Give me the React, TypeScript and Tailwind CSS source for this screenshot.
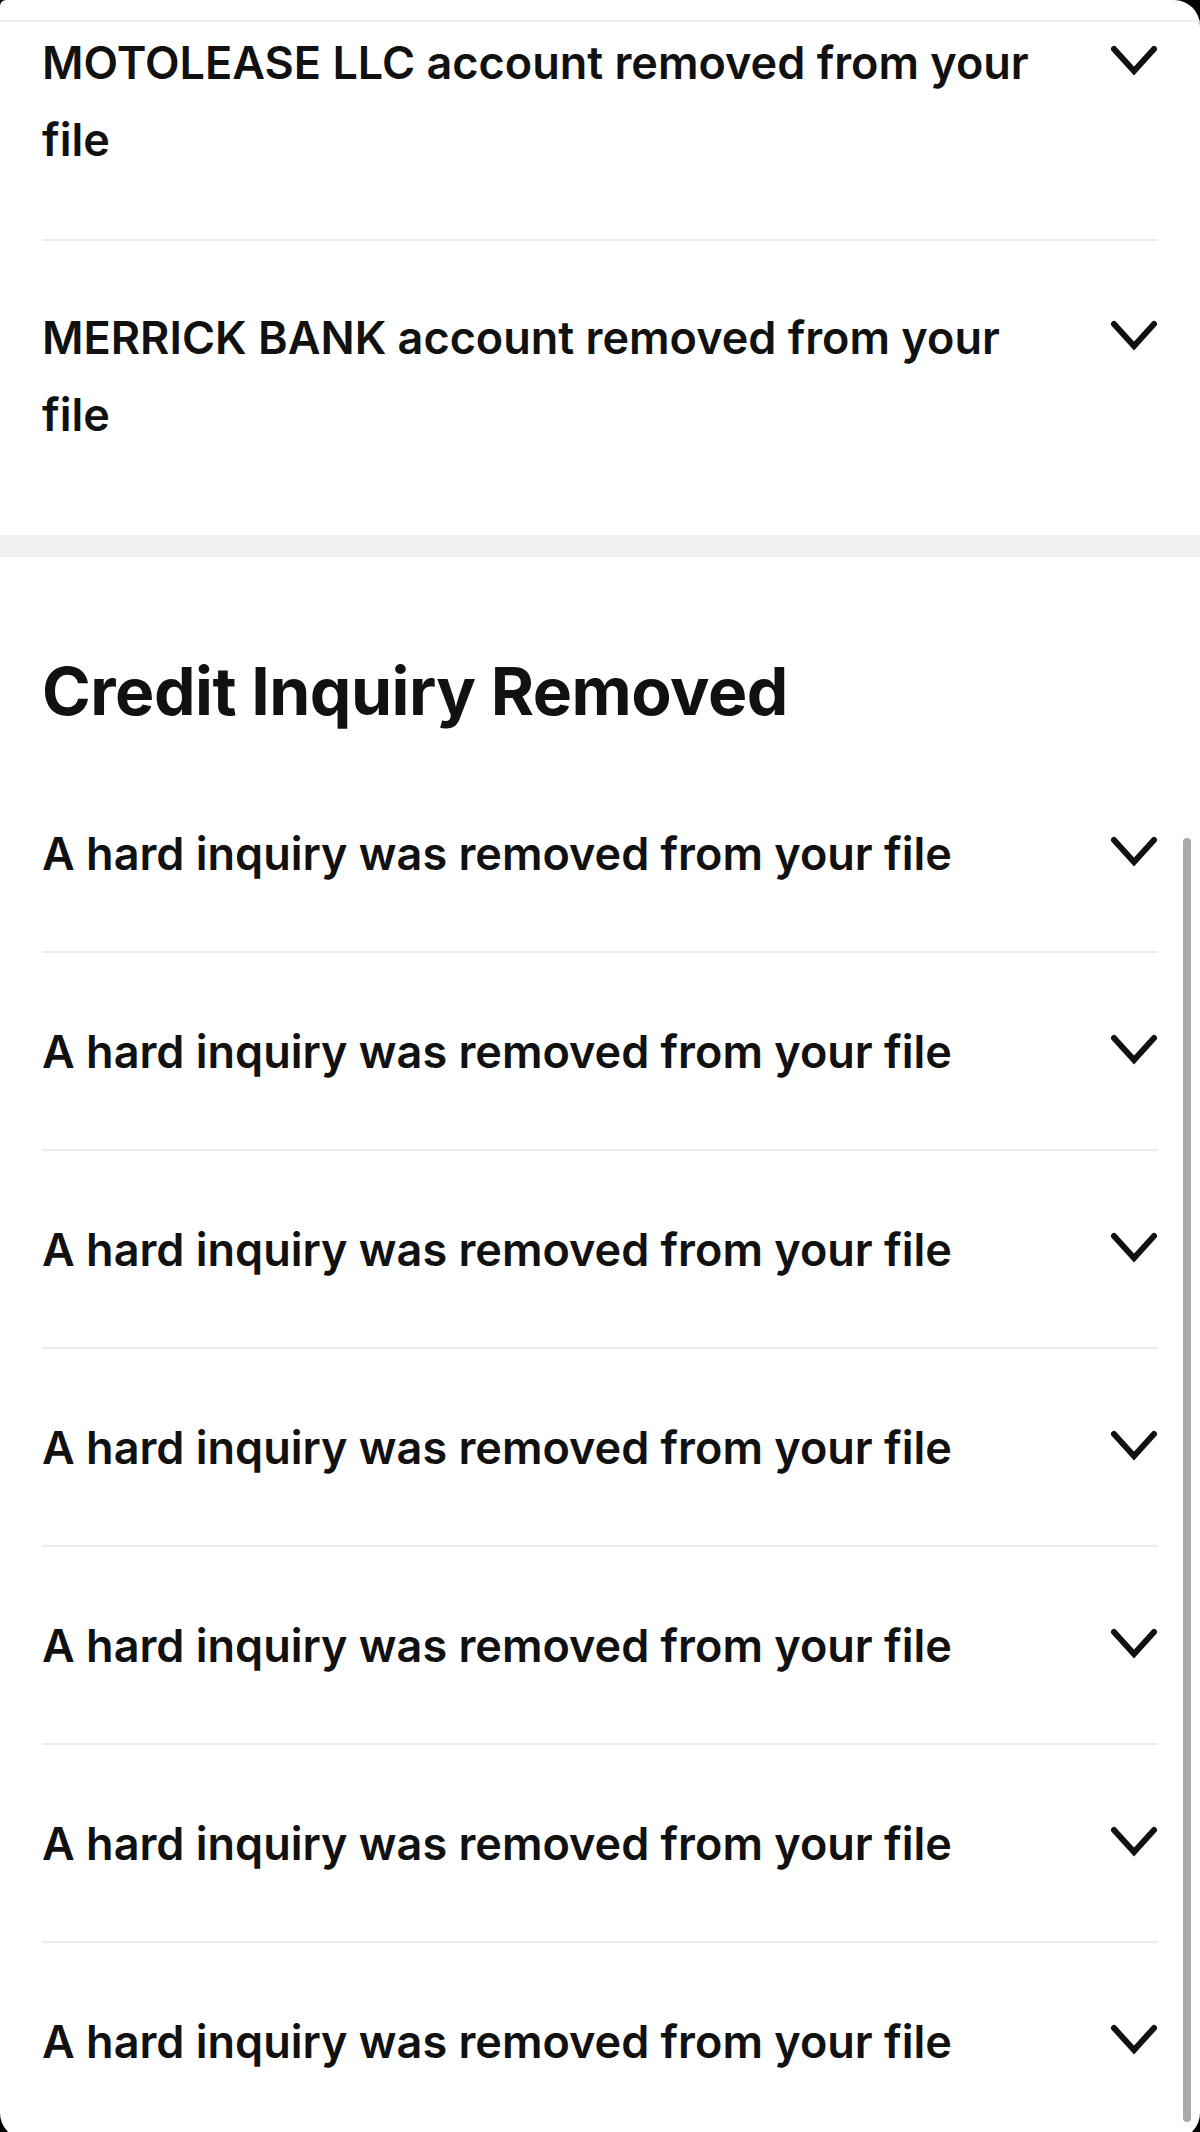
import React from 'react';

const Chevron: React.FC = () => (
  <svg width="48" height="32" viewBox="0 0 48 32" fill="none" className="shrink-0 mt-[21px]">
    <polyline points="4,4 24,26 44,4" stroke="#111111" strokeWidth="6" strokeLinecap="round" strokeLinejoin="miter" />
  </svg>
);

const Row: React.FC<{ text: string; last?: boolean; className?: string }> = ({ text, last, className }) => (
  <div className={`mx-[42px] flex items-start justify-between ${last ? '' : 'border-b-2 border-[#ececec]'} ${className ?? 'py-[59.5px]'}`}>
    <span className="max-w-[1010px] text-[45px] leading-[77px] font-semibold text-[#111111]">{text}</span>
    <Chevron />
  </div>
);

const App: React.FC = () => {
  const inquiries = Array.from({ length: 7 });

  return (
    <div className="bg-black min-h-[2132px] w-[1200px]" style={{ fontFamily: 'Inter, "Liberation Sans", sans-serif' }}>
      <div className="relative bg-white min-h-[2132px] rounded-tl-[6px] rounded-tr-[26px] rounded-b-[26px] overflow-hidden">
        {/* Accounts removed */}
        <div className="pt-[20px]">
          <div className="border-t-2 border-[#f0f0f0]" />
          <Row text="MOTOLEASE LLC account removed from your file" className="pt-[2px] pb-[61px]" />
          <Row text="MERRICK BANK account removed from your file" last className="pt-[58px] pb-[82px]" />
        </div>

        <div className="h-[22px] bg-[#eff0f2]" />

        {/* Credit Inquiry Removed */}
        <div className="pt-[98px]">
          <h2 className="mx-[42px] text-[66px] leading-[72px] font-bold tracking-[-0.5px] text-[#111111] mb-[28px]">Credit Inquiry Removed</h2>
          {inquiries.map((_, i) => (
            <Row key={i} text="A hard inquiry was removed from your file" last={i === inquiries.length - 1} />
          ))}
        </div>

        {/* scroll indicator */}
        <div className="absolute left-[1183px] top-[838px] w-[8px] h-[1284px] rounded-full bg-[#a9a9a9]" />
      </div>
    </div>
  );
};

export default App;
